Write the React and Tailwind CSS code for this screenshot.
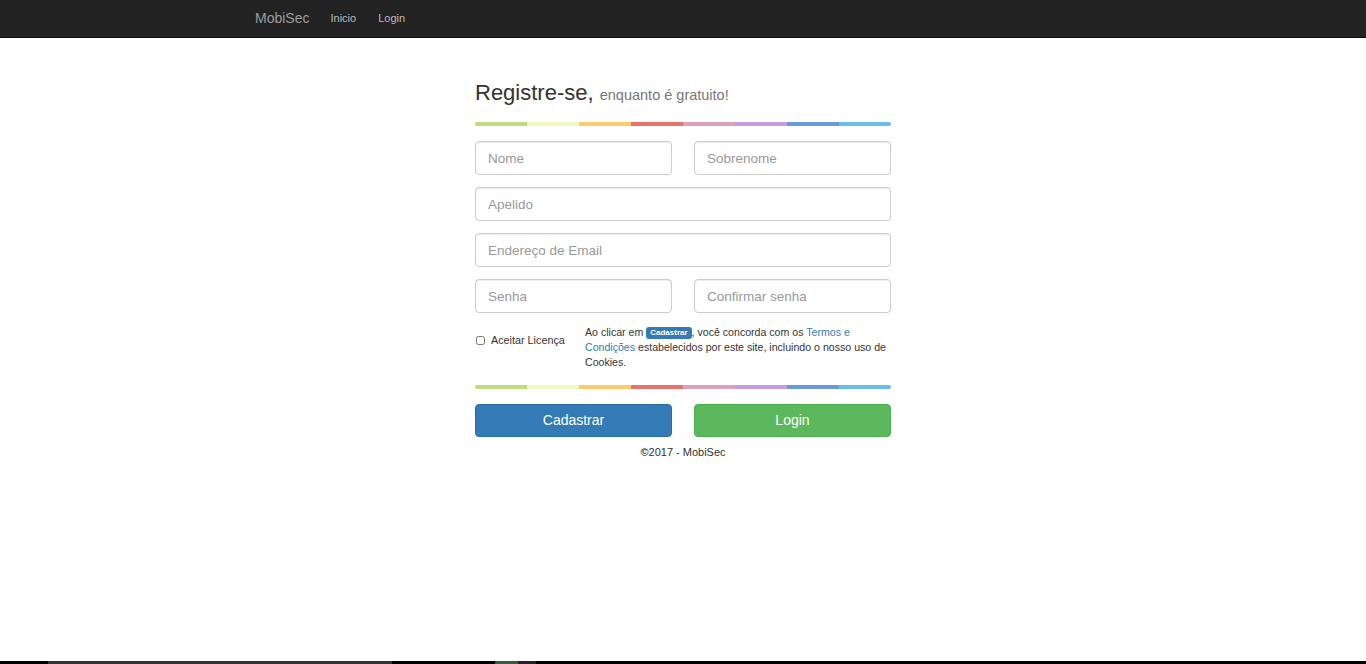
const stripes = ['bg-[#c1dc7c]', 'bg-[#f1f8c0]', 'bg-[#fbcb6c]', 'bg-[#ea7369]', 'bg-[#dc9fbe]', 'bg-[#c39ede]', 'bg-[#6a9bd9]', 'bg-[#67bfe5]'];

function ColorBar({ className }) {
  return (
    <div className={`flex h-[4px] rounded-sm overflow-hidden ${className}`}>
      {stripes.map((c) => (
        <div key={c} className={`flex-1 ${c}`} />
      ))}
    </div>
  );
}

function Field({ placeholder, type = 'text' }) {
  return (
    <input
      type={type}
      placeholder={placeholder}
      className="w-full h-[34px] px-[12px] text-[13.5px] text-[#555] placeholder:text-[#999] border border-[#ccc] rounded-[4px] outline-none shadow-[inset_0_1px_1px_rgba(0,0,0,0.075)]"
    />
  );
}

export default function App() {
  return (
    <div className="min-h-screen flex flex-col bg-white text-[#333] font-['Liberation_Sans',Arial,sans-serif]">
      <nav className="h-[38px] bg-[#222] border-b border-[#080808] flex items-center">
        <div className="pl-[255px] flex items-center">
          <a href="#" className="text-[#9d9d9d] text-[14px] mr-[21px]">MobiSec</a>
          <a href="#" className="text-[#bbb] text-[11px] mr-[22px]">Inicio</a>
          <a href="#" className="text-[#bbb] text-[11px]">Login</a>
        </div>
      </nav>

      <main className="flex-1 flex justify-center pt-[42px]">
        <div className="w-[416px]">
          <h2 className="text-[22px] leading-[26px]">
            Registre-se, <small className="text-[14.5px] leading-none text-[#777]">enquanto é gratuito!</small>
          </h2>
          <ColorBar className="mt-[16px]" />

          <div className="mt-[15px] flex flex-col gap-[12px]">
            <div className="flex gap-[22px]">
              <Field placeholder="Nome" />
              <Field placeholder="Sobrenome" />
            </div>
            <Field placeholder="Apelido" />
            <Field placeholder="Endereço de Email" type="email" />
            <div className="flex gap-[22px]">
              <Field placeholder="Senha" type="password" />
              <Field placeholder="Confirmar senha" type="password" />
            </div>
          </div>

          <div className="mt-[12px] flex leading-[15px]">
            <label className="w-[110px] shrink-0 flex items-center gap-[6px] pt-[8px] self-start text-[10.8px]">
              <input type="checkbox" className="w-[9px] h-[9px] ml-[1px] accent-[#ccc]" />
              <span className="text-[#333]">Aceitar Licença</span>
            </label>
            <p className="text-[#333] text-[10.6px]">
              Ao clicar em{' '}
              <span className="inline-block bg-[#337ab7] text-white text-[8px] font-bold leading-[10px] px-[4px] py-[1px] rounded-[3px] align-[1px]">Cadastrar</span>
              , você concorda com os <a href="#" className="text-[#337ab7]">Termos e Condições</a> estabelecidos por este site, incluindo o nosso uso de Cookies.
            </p>
          </div>

          <ColorBar className="mt-[15px]" />

          <div className="mt-[15px] flex gap-[22px]">
            <button className="flex-1 h-[33px] rounded-[4px] bg-[#337ab7] border border-[#2e6da4] text-white text-[14px]">Cadastrar</button>
            <button className="flex-1 h-[33px] rounded-[4px] bg-[#5cb85c] border border-[#4cae4c] text-white text-[14px]">Login</button>
          </div>

          <p className="mt-[8px] text-center text-[11px] leading-[15px]">
            <span className="font-bold">©</span>2017 - MobiSec
          </p>
        </div>
      </main>

      <div className="h-[3px] flex bg-black">
        <div className="w-[48px]" />
        <div className="w-[344px] bg-[#333]" />
        <div className="w-[103px]" />
        <div className="w-[23px] bg-[#3d5a3a]" />
        <div className="w-[18px] bg-[#222]" />
      </div>
    </div>
  );
}
